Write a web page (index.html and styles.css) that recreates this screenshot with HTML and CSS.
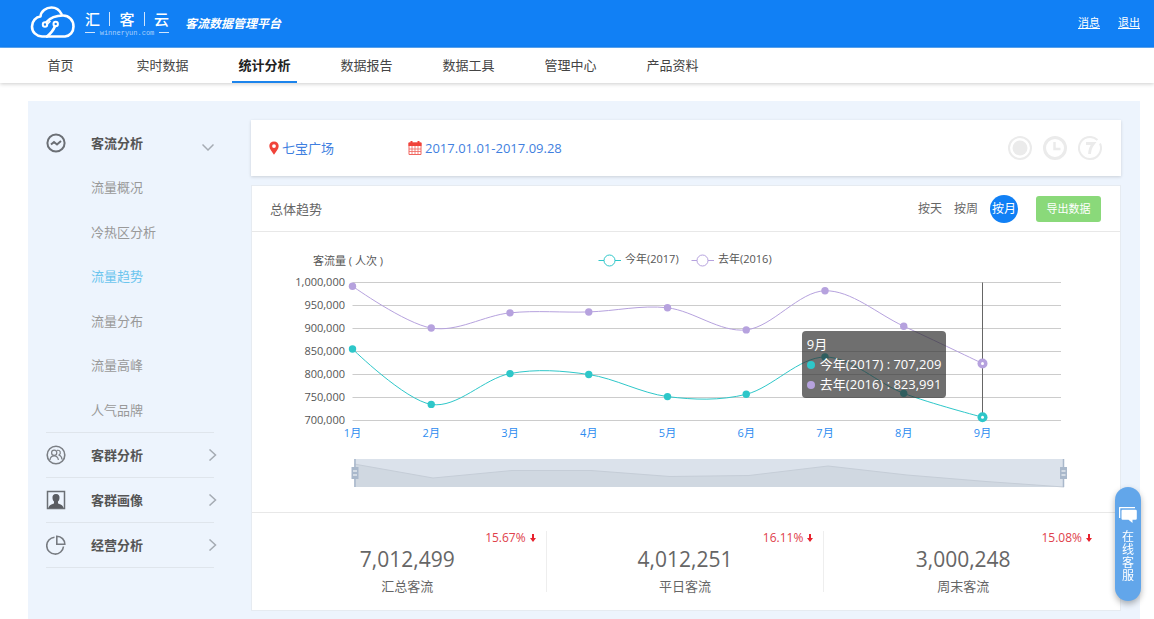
FILE: index.html
```html
<!DOCTYPE html>
<html lang="zh">
<head>
    <meta charset="UTF-8">
    <meta name="viewport" content="width=device-width, initial-scale=1.0">
    <title>汇客云 - 客流数据管理平台</title>
    <link rel="stylesheet" href="styles.css">
</head>
<body>
    <header class="top-bar">
        <svg class="logo" viewBox="0 0 46 34" width="46" height="34">
            <g fill="none" stroke="#fff" stroke-width="2.600" stroke-linecap="round" stroke-linejoin="round">
                <path d="M16 30.500H12C6 30 2 26 2 20.500C2 15 6 11 10.500 10.500C11 5 16 1.500 21.500 1.500C26 1.500 29.500 4 31.500 8"/>
                <path d="M17 30.500H35C40 30 43.500 26 43.500 20.500C43.500 14 39 9.500 33 9.500C26 9.500 20 12 16.500 16"/>
                <path d="M17 30.500C20 28 23.500 24 24.800 20.500"/>
                <circle cx="15" cy="18.500" r="2.200" stroke-width="2"/>
                <circle cx="25.700" cy="18" r="2.200" stroke-width="2"/>
                <path d="M17 18.500L20 15.500" stroke-width="1.600"/>
            </g>
        </svg>
        <div class="brand">
            <div class="brand-name"><span>汇</span><i></i><span>客</span><i></i><span>云</span></div>
            <div class="brand-site"><i></i><span>winneryun.com</span><i></i></div>
        </div>
        <span class="slogan">客流数据管理平台</span>
        <div class="user-links">
            <a href="#">消息</a>
            <a href="#">退出</a>
        </div>
    </header>

    <nav class="main-nav">
        <a href="#">首页</a>
        <a href="#">实时数据</a>
        <a href="#" class="active">统计分析</a>
        <a href="#">数据报告</a>
        <a href="#">数据工具</a>
        <a href="#">管理中心</a>
        <a href="#">产品资料</a>
    </nav>

    <div class="page">
        <aside class="sidebar">
            <a href="#" class="menu-item open">
                <svg viewBox="0 0 20 20" width="20" height="20" fill="none" stroke="#6b6f75" stroke-width="2">
                    <circle cx="10" cy="10" r="8.6"/>
                    <path d="M5 11.5L8 9L11 11.5L15 8"/>
                </svg>
                <span>客流分析</span>
                <svg class="arrow" viewBox="0 0 12 12" width="12" height="12" fill="none" stroke="#a5abb3" stroke-width="1.5"><path d="M0.5 3.5L6 9L11.5 3.5"/></svg>
            </a>
            <ul class="sub-menu">
                <li><a href="#">流量概况</a></li>
                <li><a href="#">冷热区分析</a></li>
                <li><a href="#" class="active">流量趋势</a></li>
                <li><a href="#">流量分布</a></li>
                <li><a href="#">流量高峰</a></li>
                <li><a href="#">人气品牌</a></li>
            </ul>
            <a href="#" class="menu-item">
                <svg viewBox="0 0 20 20" width="20" height="20" fill="none" stroke="#7b7f85" stroke-width="1.2">
                    <circle cx="10" cy="10" r="8.8" stroke-width="1.6"/>
                    <circle cx="8.2" cy="7.8" r="2.6"/>
                    <path d="M4 15C4.200 12 6 10.800 8.200 10.800S12 12 12.400 15"/>
                    <path d="M11 5.400C14.500 4.500 15.300 8.500 13 10C15 10.800 15.900 12.500 16 14.500"/>
                </svg>
                <span>客群分析</span>
                <svg class="arrow" viewBox="0 0 12 12" width="12" height="12" fill="none" stroke="#a5abb3" stroke-width="1.5"><path d="M4.500 0.500L10.500 6L4.500 11.500"/></svg>
            </a>
            <a href="#" class="menu-item">
                <svg viewBox="0 0 20 20" width="20" height="20">
                    <rect x="1.500" y="1.500" width="17" height="17" fill="none" stroke="#6b6f75" stroke-width="1.500"/>
                    <path d="M10 4C12.700 4 13.800 6 13.500 8.200C13.300 10 12.500 11 12 11.500V13.500C14.500 14.500 17 15 17.500 18H2.500C3 15 5.500 14.500 8 13.500V11.500C7.500 11 6.700 10 6.500 8.200C6.200 6 7.300 4 10 4Z" fill="#5a5d62"/>
                </svg>
                <span>客群画像</span>
                <svg class="arrow" viewBox="0 0 12 12" width="12" height="12" fill="none" stroke="#a5abb3" stroke-width="1.5"><path d="M4.500 0.500L10.500 6L4.500 11.500"/></svg>
            </a>
            <a href="#" class="menu-item">
                <svg viewBox="0 0 20 20" width="20" height="20" fill="none" stroke="#777b81" stroke-width="1.600">
                    <path d="M8.500 2.300A8.400 8.400 0 1 0 17.500 11.500"/>
                    <path d="M10.800 1.200V9.200H18.800C18.800 5 15.500 1.200 10.800 1.200Z"/>
                </svg>
                <span>经营分析</span>
                <svg class="arrow" viewBox="0 0 12 12" width="12" height="12" fill="none" stroke="#a5abb3" stroke-width="1.5"><path d="M4.500 0.500L10.500 6L4.500 11.500"/></svg>
            </a>
        </aside>

        <main class="content">
            <section class="filter-bar">
                <a href="#" class="filter place">
                    <svg viewBox="0 0 10 14" width="10" height="14"><path fill="#f0433a" fill-rule="evenodd" d="M5 0.500C7.800 0.500 9.700 2.500 9.700 5C9.700 8 7 10.500 5 13.800C3 10.500 0.300 8 0.300 5C0.300 2.500 2.200 0.500 5 0.500ZM5 3.200A1.900 1.900 0 1 0 5 7A1.900 1.900 0 1 0 5 3.200Z"/></svg>
                    七宝广场
                </a>
                <a href="#" class="filter">
                    <svg viewBox="0 0 14 14" width="14" height="14">
                        <path d="M1 2H13V13.500H1Z" fill="#fff" stroke="#f0655e"/>
                        <path d="M0.500 1.500H13.500V5H0.500Z" fill="#f0433a"/>
                        <path d="M3.500 0V3M10.500 0V3" stroke="#f0433a" stroke-width="2"/>
                        <path d="M4 5V13M7 5V13M10 5V13M1 8H13M1 10.500H13" stroke="#f0655e" stroke-width="0.800"/>
                    </svg>
                    2017.01.01-2017.09.28
                </a>
                <div class="quick-icons">
                    <button type="button" aria-label="今日">
                        <svg viewBox="0 0 24 24" width="24" height="24"><circle cx="12" cy="12" r="11" fill="none" stroke="#ebebeb" stroke-width="2"/><circle cx="12" cy="12" r="7.500" fill="#ebebeb"/></svg>
                    </button>
                    <button type="button" aria-label="昨日">
                        <svg viewBox="0 0 24 24" width="24" height="24" fill="none" stroke="#ebebeb"><circle cx="12" cy="12" r="10.500" stroke-width="3"/><path d="M11.500 6V13H17.500" stroke-width="2.500"/></svg>
                    </button>
                    <button type="button" aria-label="近七日">
                        <svg viewBox="0 0 24 24" width="24" height="24" fill="none" stroke="#ebebeb"><path d="M19.500 4A11 11 0 1 0 22 7.500" stroke-width="2"/><path d="M8 7.500H15.500C13 10.500 11.800 13.500 11.500 18" stroke-width="2.800"/></svg>
                    </button>
                </div>
            </section>

            <section class="panel">
                <div class="panel-head">
                    <h2>总体趋势</h2>
                    <div class="period">
                        <button type="button">按天</button>
                        <button type="button">按周</button>
                        <button type="button" class="active">按月</button>
                    </div>
                    <button type="button" class="export">导出数据</button>
                </div>

                <div class="chart">
                    <svg id="trend" viewBox="0 0 868 280">
                        <text x="61" y="33">客流量 ( 人次 )</text>
                        <g fill="#fff" stroke="#2ec7c9">
                            <path d="M346.500 28.500H369"/>
                            <circle cx="357.500" cy="28.500" r="5.500"/>
                        </g>
                        <text x="373" y="31">今年(2017)</text>
                        <g fill="#fff" stroke="#b6a2de">
                            <path d="M439.500 28.500H462"/>
                            <circle cx="450.500" cy="28.500" r="5.500"/>
                        </g>
                        <text x="466" y="31">去年(2016)</text>
                        <g id="grid"></g>
                        <g id="lines"></g>
                        <g class="zoom-bar">
                            <rect x="102" y="227" width="710" height="28" fill="#dbe2eb"/>
                            <path d="M102 232L181 246L260 238.500L339 238.500L418 244.500L497 243.500L576 234L655 243L734 249.500L812 255H102Z" fill="#d0d8e1"/>
                            <path d="M102 232L181 246L260 238.500L339 238.500L418 244.500L497 243.500L576 234L655 243L734 249.500L812 255" fill="none" stroke="#c5cdd7"/>
                            <path d="M103 227V255M811.500 227V255" stroke="#a9b8cb" stroke-width="1.500"/>
                            <path d="M99.500 235H106.500V247H99.500ZM808 235H815V247H808Z" fill="#a9b8cb"/>
                            <path d="M101 239H105M101 243H105M809.500 239H813.500M809.500 243H813.500" stroke="#fff" stroke-width="1.200"/>
                        </g>
                    </svg>
                    <div class="tooltip">
                        <div>9月</div>
                        <div><i class="dot this-year"></i>今年(2017) : 707,209</div>
                        <div><i class="dot last-year"></i>去年(2016) : 823,991</div>
                    </div>
                </div>

                <div class="totals">
                    <div class="total">
                        <span class="rate">15.67% <svg viewBox="0 0 6 8" width="6" height="8"><path d="M2 0H4V4H6L3 8L0 4H2Z" fill="#e8222e"/></svg></span>
                        <strong>7,012,499</strong>
                        <span class="name">汇总客流</span>
                    </div>
                    <div class="total">
                        <span class="rate">16.11% <svg viewBox="0 0 6 8" width="6" height="8"><path d="M2 0H4V4H6L3 8L0 4H2Z" fill="#e8222e"/></svg></span>
                        <strong>4,012,251</strong>
                        <span class="name">平日客流</span>
                    </div>
                    <div class="total">
                        <span class="rate">15.08% <svg viewBox="0 0 6 8" width="6" height="8"><path d="M2 0H4V4H6L3 8L0 4H2Z" fill="#e8222e"/></svg></span>
                        <strong>3,000,248</strong>
                        <span class="name">周末客流</span>
                    </div>
                </div>
            </section>
        </main>
    </div>

    <button type="button" class="service">
        <svg viewBox="0 0 18 16" width="18" height="16">
            <path d="M0.500 11V1.500Q0.500 0.500 1.500 0.500H16" fill="none" stroke="#fff" stroke-width="1.500"/>
            <path d="M3.500 2.800H16.500Q17.800 2.800 17.800 4V11.500Q17.800 12.800 16.500 12.800H13.500V16L9.500 12.800H3.500Q2.500 12.800 2.500 11.500V4Q2.500 2.800 3.500 2.800Z" fill="#fff"/>
        </svg>
        <span>在线客服</span>
    </button>

    <script>
        const thisYear = [855500, 735000, 802000, 800000, 752000, 757000, 838000, 759000, 707209];
        const lastYear = [992000, 901000, 934000, 936000, 945000, 897000, 982000, 905000, 823991];
        const left = 100.5, right = 809, top0 = 50.5, bottom = 188.5, step = 78.75;

        function toY(value) {
            return bottom - (value - 700000) / 300000 * (bottom - top0);
        }

        // 平滑曲线
        function smoothPath(points) {
            let d = 'M' + points[0];
            for (let i = 0; i < points.length - 1; i++) {
                const p0 = points[i - 1], p1 = points[i], p2 = points[i + 1], p3 = points[i + 2];
                const c1 = p0 ? [p1[0] + (p2[0] - p0[0]) / 6, p1[1] + (p2[1] - p0[1]) / 6] : p1;
                const c2 = p3 ? [p2[0] - (p3[0] - p1[0]) / 6, p2[1] - (p3[1] - p1[1]) / 6] : p2;
                d += 'C' + c1 + ' ' + c2 + ' ' + p2;
            }
            return d;
        }

        let grid = '';
        for (let value = 700000; value <= 1000000; value += 50000) {
            const y = Math.floor(toY(value)) + 0.5;
            grid += `<path d="M${left} ${y}H${right}" stroke="#ccc"/>`;
            grid += `<text x="93" y="${y + 3}" text-anchor="end">${value.toLocaleString('en-US')}</text>`;
        }
        for (let i = 0; i < 9; i++) {
            grid += `<text class="month" x="${left + i * step}" y="205" text-anchor="middle">${i + 1}月</text>`;
        }
        document.getElementById('grid').innerHTML = grid;

        function drawLine(data, color) {
            const points = data.map((value, i) => [left + i * step, toY(value)]);
            const last = points[points.length - 1];
            let html = `<path d="${smoothPath(points)}" fill="none" stroke="${color}"/>`;
            points.forEach(p => {
                html += `<circle cx="${p[0]}" cy="${p[1]}" r="3.700" fill="${color}"/>`;
            });
            html += `<circle cx="${last[0]}" cy="${last[1]}" r="5" fill="${color}"/>`;
            html += `<circle cx="${last[0]}" cy="${last[1]}" r="1.500" fill="#fff"/>`;
            return html;
        }

        const pointerX = left + 8 * step;
        document.getElementById('lines').innerHTML =
            `<path d="M${pointerX} ${top0}V${bottom}" stroke="#666"/>` +
            drawLine(lastYear, '#b6a2de') +
            drawLine(thisYear, '#2ec7c9');
    </script>
</body>
</html>
```

FILE: styles.css
```css
* {
    box-sizing: border-box;
}
body {
    margin: 0;
    background: #fff;
    color: #666;
    font-family: "Open Sans", "Noto Sans CJK SC", sans-serif;
    font-size: 13px;
    line-height: 20px;
}
a {
    color: inherit;
    text-decoration: none;
}
button {
    padding: 0;
    border: none;
    background: none;
    color: inherit;
    font: inherit;
    cursor: pointer;
}
svg {
    display: block;
}
.top-bar {
    display: flex;
    align-items: center;
    height: 48px;
    padding: 0 14px 2px 30px;
    background: #1180f5;
    border-bottom: 1px solid #5ca9f8;
    color: #fff;
}
.brand {
    width: 84px;
    margin-left: 9px;
}
.brand-name {
    display: flex;
    align-items: center;
    justify-content: space-between;
    font-size: 15px;
    font-weight: 500;
}
.brand-name i {
    width: 1px;
    height: 14px;
    background: #cfe5fd;
}
.brand-site {
    display: flex;
    align-items: center;
    justify-content: space-between;
    font-family: "Liberation Mono", monospace;
    font-size: 7px;
    line-height: 8px;
    color: #a9d0fb;
}
.brand-site i {
    width: 10px;
    height: 1px;
    background: #cfe5fd;
}
.slogan {
    margin-left: 16px;
    font-family: "Noto Sans CJK SC", sans-serif;
    font-size: 12px;
    font-style: italic;
    font-weight: bold;
}
.user-links {
    display: flex;
    gap: 18px;
    margin-left: auto;
    font-size: 11px;
}
.user-links a {
    text-decoration: underline;
}
.main-nav {
    display: flex;
    gap: 37px;
    height: 35px;
    padding-left: 28px;
    box-shadow: 0 1px 4px rgba(0, 0, 0, 0.2);
}
.main-nav a {
    width: 65px;
    line-height: 35px;
    text-align: center;
    color: #444;
}
.main-nav .active {
    border-bottom: 2px solid #1c84ec;
    color: #222;
    font-weight: bold;
}
.page {
    display: flex;
    margin: 18px 14px 0 28px;
    padding: 19px 19px 8px 18px;
    background: #edf4fd;
}
.sidebar {
    flex: none;
    width: 168px;
    margin-right: 37px;
}
.menu-item {
    display: flex;
    align-items: center;
    height: 45px;
    border-bottom: 1px solid #dfe5ec;
    color: #555;
    font-weight: bold;
}
.menu-item span {
    margin-left: 25px;
}
.menu-item .arrow {
    margin-left: auto;
    margin-right: -3px;
}
.menu-item.open {
    border-bottom: none;
}
.menu-item.open .arrow {
    margin-top: 8px;
    margin-right: 0;
}
.sub-menu {
    display: grid;
    grid-auto-rows: 1fr;
    min-height: 268px;
    margin: 0;
    padding: 0 0 0 45px;
    border-bottom: 1px solid #dfe5ec;
    list-style: none;
    color: #999;
}
.sub-menu li {
    display: flex;
    align-items: center;
}
.sub-menu .active {
    color: #6cc5ee;
}
.content {
    flex: 1;
    min-width: 0;
}
.filter-bar {
    display: flex;
    align-items: center;
    height: 56px;
    padding: 0 19px 0 18px;
    background: #fff;
    box-shadow: 0 1px 3px rgba(0, 0, 0, 0.15);
    color: #3f7fe0;
}
.filter {
    display: flex;
    align-items: center;
    gap: 3px;
}
.filter.place {
    width: 139px;
}
.quick-icons {
    display: flex;
    gap: 11px;
    margin-left: auto;
}
.panel {
    margin-top: 9px;
    background: #fff;
    border: 1px solid #e6ebf1;
}
.panel-head {
    display: flex;
    align-items: center;
    height: 46px;
    padding: 0 19px 0 18px;
    border-bottom: 1px solid #e8e8e8;
}
.panel-head h2 {
    margin: 0;
    font-size: 13px;
    font-weight: normal;
}
.period {
    display: flex;
    align-items: center;
    gap: 12px;
    margin-left: auto;
    font-size: 12px;
}
.period .active {
    width: 28px;
    height: 28px;
    border-radius: 50%;
    background: #1180f5;
    color: #fff;
}
.export {
    width: 65px;
    height: 26px;
    margin-left: 18px;
    border-radius: 3px;
    background: #8ad97a;
    color: #fff;
    font-size: 11px;
}
.chart {
    position: relative;
    border-bottom: 1px solid #e8e8e8;
}
#trend {
    width: 100%;
    height: auto;
    font-size: 11px;
    fill: #555;
}
#trend .month {
    fill: #2d8cf0;
}
.tooltip {
    position: absolute;
    top: 99px;
    right: 20%;
    padding: 3px 5px 4px;
    border-radius: 4px;
    background: rgba(50, 50, 50, 0.7);
    color: #fff;
    white-space: nowrap;
}
.dot {
    display: inline-block;
    width: 8px;
    height: 8px;
    margin-right: 5px;
    border-radius: 50%;
}
.this-year {
    background: #2ec7c9;
}
.last-year {
    background: #b6a2de;
}
.totals {
    display: grid;
    grid-template-columns: repeat(3, 1fr);
    padding: 18px 18px 18px 17px;
}
.total {
    display: flex;
    flex-direction: column;
    align-items: center;
    height: 61px;
    border-right: 1px solid #eee;
}
.total:last-child {
    border-right: none;
}
.rate {
    display: flex;
    align-items: center;
    gap: 4px;
    align-self: flex-end;
    margin-right: 10px;
    font-size: 12px;
    line-height: 14px;
    color: #e0414b;
}
.total strong {
    font-size: 21px;
    font-weight: normal;
    line-height: 28px;
}
.total .name {
    line-height: 26px;
}
.service {
    position: fixed;
    right: 13px;
    bottom: 18px;
    display: flex;
    flex-direction: column;
    align-items: center;
    gap: 7px;
    width: 26px;
    height: 114px;
    padding-top: 20px;
    border-radius: 13px;
    background: #62a6ea;
    box-shadow: 0 3px 6px rgba(0, 0, 0, 0.3);
    color: #fff;
    font-size: 12px;
}
.service span {
    width: 12px;
    line-height: 13px;
}
```
